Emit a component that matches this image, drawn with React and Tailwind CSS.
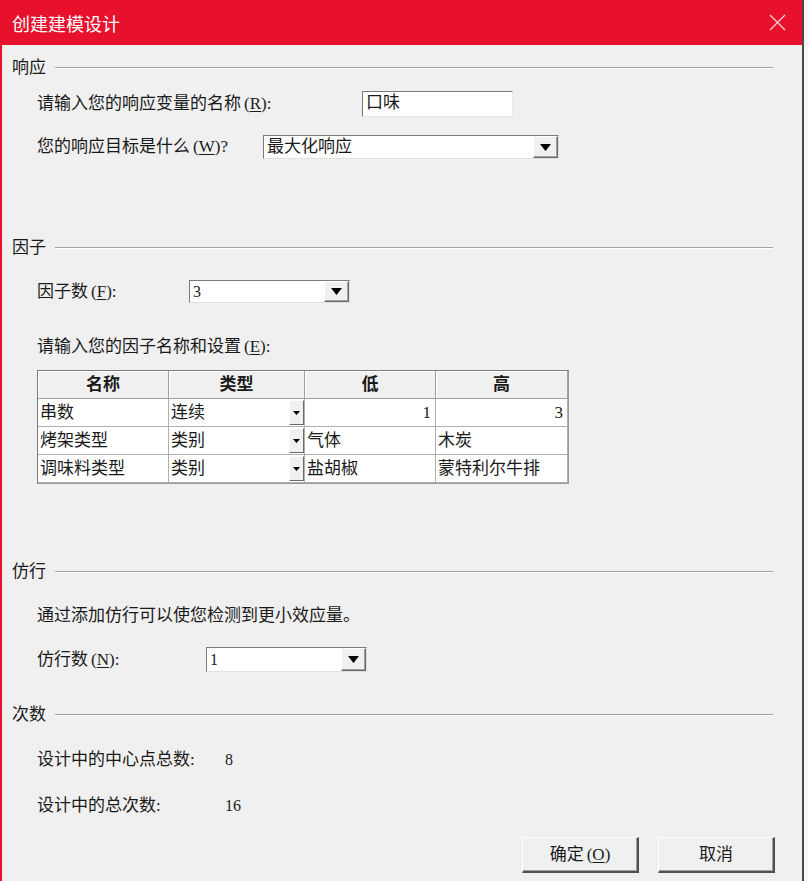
import React from "react";

const FONT = '"Liberation Serif","Noto Sans CJK SC",serif';

function Arrow({ small }) {
  return small ? (
    <svg width="7" height="4" viewBox="0 0 7 4"><polygon points="0,0 7,0 3.5,4" fill="#000" /></svg>
  ) : (
    <svg width="11" height="7" viewBox="0 0 11 7"><polygon points="0,0 11,0 5.5,7" fill="#000" /></svg>
  );
}

function DropBtn() {
  return (
    <div className="w-[25px] h-full bg-[#f0f0f0] flex items-center justify-center border border-t-white border-l-white border-b-[#6a6a6a] border-r-[#6a6a6a] shadow-[inset_-1px_-1px_0_#a0a0a0]">
      <Arrow />
    </div>
  );
}

function Section({ title }) {
  return (
    <div className="h-[20px] flex items-center gap-[9px]">
      <span className="text-[17px] leading-[20px]">{title}</span>
      <div className="flex-1 h-[2px] border-t border-t-[#a0a0a0] border-b border-b-white" />
    </div>
  );
}

function Mn({ c }) {
  return (
    <>
      <span className="ml-[3px]">(</span>
      <span className="underline underline-offset-2">{c}</span>)
    </>
  );
}

function TypeCell({ text }) {
  return (
    <div className="h-[28px] bg-white border-r border-b border-[#b0b0b0] flex items-stretch">
      <span className="flex-1 pl-[2px] text-[17px] leading-[28px]">{text}</span>
      <div className="w-[15px] my-[1px] bg-[#f0f0f0] flex items-center justify-center border border-t-white border-l-white border-b-[#6a6a6a] border-r-[#6a6a6a]">
        <Arrow small />
      </div>
    </div>
  );
}

function Cell({ text, right }) {
  return (
    <div
      className={
        right
          ? "h-[28px] bg-white border-r border-b border-[#b0b0b0] text-right pr-[4px] text-[17px] leading-[28px]"
          : "h-[28px] bg-white border-r border-b border-[#b0b0b0] pl-[2px] text-[17px] leading-[28px]"
      }
    >
      {text}
    </div>
  );
}

function Head({ text }) {
  return (
    <div className="h-[28px] bg-[#f0f0f0] border-r border-b border-[#a0a0a0] shadow-[inset_1px_1px_0_#ffffff] flex items-center justify-center font-bold text-[17px] leading-[28px]">
      {text}
    </div>
  );
}

export default function App() {
  const rows = [
    ["串数", "连续", "1", "3", true],
    ["烤架类型", "类别", "气体", "木炭", false],
    ["调味料类型", "类别", "盐胡椒", "蒙特利尔牛排", false],
  ];
  return (
    <div className="w-[808px] h-[881px] flex bg-[#f6f6f6] overflow-hidden text-[#1a1a1a]" style={{ fontFamily: FONT }}>
      <div className="w-[804px] h-full flex flex-col border-r-2 border-r-[#4a4a4a]">
        <div className="h-[45px] shrink-0 bg-[#e8112d] flex items-center justify-between pl-[12px] pr-[16px]">
          <span className="text-white text-[18px] leading-[24px]" style={{ fontFamily: '"Noto Sans CJK SC",sans-serif' }}>
            创建建模设计
          </span>
          <svg width="17" height="17" viewBox="0 0 17 17">
            <path d="M1 1 L16 16 M16 1 L1 16" stroke="#f6d0d5" strokeWidth="1.3" />
          </svg>
        </div>
        <div className="flex-1 bg-[#f0f0f0] border-l-2 border-l-[#e8112d] flex flex-col pl-[10px] pr-[29px] pt-[13px]">
          <Section title="响应" />
          <div className="mt-[13px] pl-[25px] h-[26px] flex items-center">
            <span className="w-[325px] text-[17px] leading-[20px]">
              请输入您的响应变量的名称<Mn c="R" />:
            </span>
            <div className="w-[151px] h-[26px] bg-white border border-t-[#7a7a7a] border-l-[#7a7a7a] border-b-[#e8e8e8] border-r-[#e8e8e8] pl-[3px] text-[17px] leading-[22px]">
              口味
            </div>
          </div>
          <div className="mt-[18px] pl-[25px] h-[24px] flex items-center">
            <span className="w-[226px] text-[17px] leading-[20px]">
              您的响应目标是什么<Mn c="W" />?
            </span>
            <div className="w-[296px] h-[24px] bg-white border border-t-[#7a7a7a] border-l-[#7a7a7a] border-b-[#e0e0e0] border-r-[#e0e0e0] flex">
              <span className="flex-1 pl-[3px] text-[17px] leading-[22px]">最大化响应</span>
              <DropBtn />
            </div>
          </div>

          <div className="mt-[79px]">
            <Section title="因子" />
          </div>
          <div className="mt-[22px] pl-[25px] h-[23px] flex items-center">
            <span className="w-[152px] text-[17px] leading-[20px]">
              因子数<Mn c="F" />:
            </span>
            <div className="w-[161px] h-[23px] bg-white border border-t-[#7a7a7a] border-l-[#7a7a7a] border-b-[#e0e0e0] border-r-[#e0e0e0] flex">
              <span className="flex-1 pl-[3px] text-[16px] leading-[21px]">3</span>
              <DropBtn />
            </div>
          </div>
          <div className="mt-[34px] pl-[25px] h-[20px] text-[17px] leading-[20px]">
            请输入您的因子名称和设置<Mn c="E" />:
          </div>
          <div className="mt-[13px] ml-[25px] w-[532px] border border-t-[#7a7a7a] border-l-[#7a7a7a] border-b-[#9a9a9a] border-r-[#9a9a9a] shadow-[inset_1px_1px_0_#d8d8d8]">
            <div className="grid grid-cols-[131px_136px_131px_132px]">
              <Head text="名称" />
              <Head text="类型" />
              <Head text="低" />
              <Head text="高" />
              {rows.map((r) => (
                <React.Fragment key={r[0]}>
                  <Cell text={r[0]} />
                  <TypeCell text={r[1]} />
                  <Cell text={r[2]} right={r[4]} />
                  <Cell text={r[3]} right={r[4]} />
                </React.Fragment>
              ))}
            </div>
          </div>

          <div className="mt-[78px]">
            <Section title="仿行" />
          </div>
          <div className="mt-[24px] pl-[25px] h-[20px] text-[17px] leading-[20px]">通过添加仿行可以使您检测到更小效应量。</div>
          <div className="mt-[21px] pl-[25px] h-[25px] flex items-center">
            <span className="w-[169px] text-[17px] leading-[20px]">
              仿行数<Mn c="N" />:
            </span>
            <div className="w-[161px] h-[25px] bg-white border border-t-[#7a7a7a] border-l-[#7a7a7a] border-b-[#e0e0e0] border-r-[#e0e0e0] flex">
              <span className="flex-1 pl-[3px] text-[16px] leading-[23px]">1</span>
              <DropBtn />
            </div>
          </div>

          <div className="mt-[33px]">
            <Section title="次数" />
          </div>
          <div className="mt-[25px] pl-[25px] h-[20px] flex items-center text-[17px] leading-[20px]">
            <span className="w-[188px]">设计中的中心点总数:</span>
            <span className="text-[16px]">8</span>
          </div>
          <div className="mt-[26px] pl-[25px] h-[20px] flex items-center text-[17px] leading-[20px]">
            <span className="w-[188px]">设计中的总次数:</span>
            <span className="text-[16px]">16</span>
          </div>

          <div className="mt-[21px] -mr-[2px] flex justify-end gap-[19px]">
            <button className="w-[117px] h-[36px] bg-[#f0f0f0] border border-t-white border-l-white border-b-2 border-r-2 border-b-[#505050] border-r-[#505050] shadow-[inset_-1px_-1px_0_#a0a0a0] text-[17px] leading-[20px]">
              确定<Mn c="O" />
            </button>
            <button className="w-[117px] h-[36px] bg-[#f0f0f0] border border-t-white border-l-white border-b-2 border-r-2 border-b-[#505050] border-r-[#505050] shadow-[inset_-1px_-1px_0_#a0a0a0] text-[17px] leading-[20px]">
              取消
            </button>
          </div>
        </div>
      </div>
    </div>
  );
}
